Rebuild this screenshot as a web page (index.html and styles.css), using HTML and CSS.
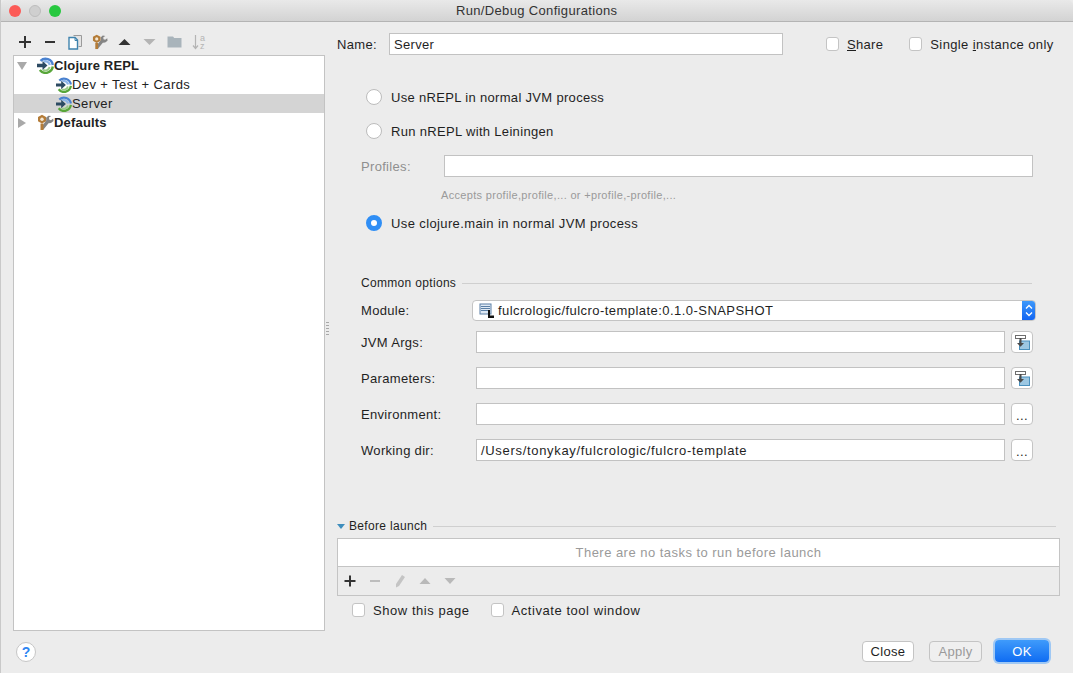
FILE: index.html
```html
<!DOCTYPE html>
<html lang="en">
<head>
<meta charset="utf-8">
<title>Run/Debug Configurations</title>
<link rel="stylesheet" href="styles.css">
</head>
<body>
<svg class="defs" width="0" height="0" aria-hidden="true">
  <symbol id="repl" viewBox="0 0 17 17">
    <path d="M3.500 3.800A7.300 7.300 0 0 1 15.800 8" fill="none" stroke="#4a82d0" stroke-width="2.400"/>
    <path d="M6.500 4.600A4.600 4.600 0 0 1 12.800 8" fill="none" stroke="#8db5e8" stroke-width="2.400"/>
    <path d="M15.800 9.500A7.300 7.300 0 0 1 2.800 13" fill="none" stroke="#58a63a" stroke-width="2.400"/>
    <path d="M12.600 10A4.600 4.600 0 0 1 6 13" fill="none" stroke="#9aca86" stroke-width="2"/>
    <path d="M0 6.800h5.500V4l5 4.500-5 4.500v-2.800H0z" fill="#2c4a62"/>
  </symbol>
  <symbol id="tool" viewBox="0 0 17 17">
    <path d="M6.500 15.500l5-6.200 2.500-.2 2.500-2-.3-2.600-2.200 1.700-1.800-.7-.2-2 2.200-1.400-2.800-.4-2.300 2 .1 2.900L4 13.500z" fill="#858585"/>
    <path d="M5 .8l4 2.200v4.300l-4 2.300-4-2.300V3z" fill="#b47c38"/>
    <circle cx="5" cy="5.200" r="1.700" fill="#f4e8d4"/>
    <path d="M3.500 9.500h3v6.500h-3z" fill="#b47c38"/>
  </symbol>
  <symbol id="insert" viewBox="0 0 16 16">
    <rect x="5.500" y="7" width="10" height="8.500" fill="#9cc7e2" stroke="#4a90bd"/>
    <rect x="1.500" y="1.500" width="10" height="3" fill="#fff" stroke="#6e6e6e"/>
    <path d="M5.500 4h2v5h2.500l-3.500 3.800L3 9h2.500z" fill="#4a4a4a"/>
  </symbol>
</svg>
<div class="window">
  <header class="titlebar">
    <div class="lights">
      <span class="light red"></span>
      <span class="light grey"></span>
      <span class="light green"></span>
    </div>
    <div class="title">Run/Debug Configurations</div>
  </header>
  <div class="content">
    <aside class="sidebar">
      <div class="toolbar">
        <span class="tb"><svg width="14" height="14" viewBox="0 0 14 14"><path d="M6 1h2v5h5v2H8v5H6V8H1V6h5z" fill="#333"/></svg></span>
        <span class="tb"><svg width="14" height="14" viewBox="0 0 14 14"><path d="M2 6h10v2H2z" fill="#333"/></svg></span>
        <span class="tb"><svg width="16" height="16" viewBox="0 0 16 16"><path d="M6.500 1.500h8v11h-3" fill="#e4e4e4" stroke="#9a9a9a"/><path d="M2 3.500h6l2.500 2.500v9H2z" fill="#fff" stroke="#3f83ad" stroke-width="1.400"/><path d="M8 3.500V6.500h2.500" fill="none" stroke="#3f83ad"/></svg></span>
        <span class="tb"><svg width="16" height="16"><use href="#tool"/></svg></span>
        <span class="tb"><svg width="13" height="8" viewBox="0 0 13 8"><path d="M6.500 1L12.500 7H.5z" fill="#333"/></svg></span>
        <span class="tb"><svg width="13" height="8" viewBox="0 0 13 8"><path d="M.5 1h12l-6 6z" fill="#b4b4b4"/></svg></span>
        <span class="tb"><svg width="15" height="13" viewBox="0 0 15 13"><path d="M.5 1.500h5.500l1.200 1.500h7.300v9.500H.5z" fill="#a9b4bb"/></svg></span>
        <span class="tb"><svg width="15" height="16" viewBox="0 0 15 16"><path d="M3.500 1v13M1 11.500l2.500 3 2.500-3" fill="none" stroke="#b4b4b4" stroke-width="1.200"/><text x="8" y="7" class="sort-letter">a</text><text x="8" y="15" class="sort-letter">z</text></svg></span>
      </div>
      <div class="tree">
        <div class="node bold"><span class="arrow open"></span><svg class="node-icon" width="17" height="17"><use href="#repl"/></svg><span>Clojure REPL</span></div>
        <div class="node child"><svg class="node-icon" width="16" height="16"><use href="#repl"/></svg><span>Dev + Test + Cards</span></div>
        <div class="node child selected"><svg class="node-icon" width="16" height="16"><use href="#repl"/></svg><span>Server</span></div>
        <div class="node bold"><span class="arrow closed"></span><svg class="node-icon" width="17" height="17"><use href="#tool"/></svg><span>Defaults</span></div>
      </div>
      <div class="help">?</div>
    </aside>
    <div class="splitter"><span class="grip"></span></div>
    <main class="form">
      <div class="name-row">
        <label class="name-label">Name:</label>
        <div class="field name-field">Server</div>
        <span class="check share-check"><span class="box"></span><span><u>S</u>hare</span></span>
        <span class="check wide-text"><span class="box"></span><span>Single <u>i</u>nstance only</span></span>
      </div>

      <div class="radio-row first"><span class="radio"></span><span>Use nREPL in normal JVM process</span></div>
      <div class="radio-row second"><span class="radio"></span><span>Run nREPL with Leiningen</span></div>
      <div class="profiles">
        <label class="profiles-label">Profiles:</label>
        <div class="field grow"></div>
      </div>
      <div class="hint">Accepts profile,profile,... or +profile,-profile,...</div>
      <div class="radio-row third"><span class="radio on"></span><span class="wide-text">Use clojure.main in normal JVM process</span></div>

      <div class="legend options-legend"><span>Common options</span><span class="rule"></span></div>
      <div class="module-row">
        <label class="opt-label module-label">Module:</label>
        <div class="combo">
          <svg class="module-icon" width="16" height="15" viewBox="0 0 16 15"><rect x="1" y="1" width="11" height="10" fill="#dfe9f4" stroke="#5a7fa6"/><path d="M2 3.500h9M2 5.500h9M2 7.500h9" stroke="#5a7fa6"/><path d="M9 7h2v5.500h4V15H9z" fill="#111"/></svg>
          <span class="combo-text">fulcrologic/fulcro-template:0.1.0-SNAPSHOT</span>
          <span class="stepper"><svg width="8" height="15" viewBox="0 0 8 15"><path d="M1 5.500l3-3 3 3M1 9.500l3 3 3-3" fill="none" stroke="#fff" stroke-width="1.300"/></svg></span>
        </div>
      </div>
      <div class="opt-row"><label class="opt-label">JVM Args:</label><div class="field grow"></div><span class="mini"><svg width="16" height="16"><use href="#insert"/></svg></span></div>
      <div class="opt-row"><label class="opt-label">Parameters:</label><div class="field grow"></div><span class="mini"><svg width="16" height="16"><use href="#insert"/></svg></span></div>
      <div class="opt-row"><label class="opt-label">Environment:</label><div class="field grow"></div><span class="mini dots">...</span></div>
      <div class="opt-row"><label class="opt-label">Working dir:</label><div class="field grow path-text">/Users/tonykay/fulcrologic/fulcro-template</div><span class="mini dots">...</span></div>

      <div class="legend launch-legend"><span class="tri"></span><span>Before launch</span><span class="rule"></span></div>
      <div class="tasks">
        <div class="tasks-empty">There are no tasks to run before launch</div>
        <div class="tasks-bar">
          <span class="tb2"><svg width="12" height="12" viewBox="0 0 12 12"><path d="M5 .5h2V5h4.500v2H7v4.500H5V7H.5V5H5z" fill="#333"/></svg></span>
          <span class="tb2"><svg width="12" height="12" viewBox="0 0 12 12"><path d="M1 5h10v2H1z" fill="#bdbdbd"/></svg></span>
          <span class="tb2"><svg width="12" height="14" viewBox="0 0 12 14"><path d="M8 1l3 2-6 9-3 1.500L2 10z" fill="#c4c4c4"/></svg></span>
          <span class="tb2"><svg width="12" height="8" viewBox="0 0 12 8"><path d="M6 1l5.500 6H.5z" fill="#b9b9b9"/></svg></span>
          <span class="tb2"><svg width="12" height="8" viewBox="0 0 12 8"><path d="M.5 1h11L6 7z" fill="#b9b9b9"/></svg></span>
        </div>
      </div>
      <div class="launch-checks">
        <span class="check"><span class="box"></span><span>Show this page</span></span>
        <span class="check"><span class="box"></span><span>Activate tool window</span></span>
      </div>
      <div class="actions">
        <span class="btn close">Close</span>
        <span class="btn disabled">Apply</span>
        <span class="btn primary">OK</span>
      </div>
    </main>
  </div>
</div>
</body>
</html>
```
FILE: styles.css
```css
* { box-sizing: border-box; }
html, body { margin: 0; height: 100%; }
body {
  background: #ececec;
  font-family: "Liberation Sans", Arial, sans-serif;
  font-size: 13px;
  color: #1f1f1f;
  overflow: hidden;
}
.defs { display: block; height: 0; }
.window {
  width: 1073px;
  height: 673px;
  display: flex;
  flex-direction: column;
  background: #ececec;
  border-left: 1px solid #c9c9c9;
}
.titlebar {
  height: 22px;
  flex: none;
  display: flex;
  align-items: center;
  background: linear-gradient(#e9e9e9, #d3d3d3);
  border-bottom: 1px solid #b4b4b4;
  border-radius: 5px 5px 0 0;
  padding-left: 8px;
}
.lights { display: flex; gap: 8px; width: 447px; }
.light { width: 12px; height: 12px; border-radius: 50%; }
.red { background: #fc5b57; }
.grey { background: #cfcfcf; border: 1px solid #bdbdbd; }
.green { background: #27c83f; }
.title { font-size: 13px; color: #333; letter-spacing: .34px; }
.content { flex: 1; display: flex; min-height: 0; }

.sidebar {
  width: 324px;
  flex: none;
  padding-left: 11px;
  display: flex;
  flex-direction: column;
}
.toolbar {
  height: 33px;
  display: flex;
  align-items: center;
  padding-top: 6px;
}
.tb { width: 25px; display: flex; justify-content: center; align-items: center; }
.sort-letter { font-size: 9px; fill: #b4b4b4; }
.tree {
  height: 576px;
  margin-left: 1px;
  background: #fff;
  border: 1px solid #c3c3c3;
}
.node {
  height: 19px;
  display: flex;
  align-items: center;
  font-size: 13px;
  letter-spacing: .4px;
  padding-left: 21px;
  color: #222;
}
.node.bold { font-weight: bold; letter-spacing: .18px; }
.node.child { padding-left: 42px; }
.node.selected { background: #d4d4d4; }
.node-icon { flex: none; }
.arrow { width: 0; height: 0; flex: none; }
.arrow.open {
  border-left: 5px solid transparent;
  border-right: 5px solid transparent;
  border-top: 8px solid #a9a9a9;
  margin-left: -18px;
  margin-right: 10px;
}
.arrow.closed {
  border-top: 5px solid transparent;
  border-bottom: 5px solid transparent;
  border-left: 8px solid #a9a9a9;
  margin-left: -17px;
  margin-right: 11px;
}
.help {
  width: 20px;
  height: 20px;
  margin: 11px 0 0 4px;
  border-radius: 50%;
  border: 1px solid #c6c6c6;
  background: #fff;
  color: #2f86f2;
  font-size: 14px;
  font-weight: bold;
  display: flex;
  align-items: center;
  justify-content: center;
}

.splitter {
  width: 12px;
  flex: none;
  display: flex;
  align-items: center;
  justify-content: center;
  padding: 0 7px 37px 0;
}
.grip {
  width: 3px;
  height: 14px;
  flex: none;
  background: repeating-linear-gradient(#a8a8a8 0 1px, transparent 1px 3px);
}

.form {
  flex: 1;
  min-width: 0;
  display: flex;
  flex-direction: column;
  padding-right: 13px;
  letter-spacing: .32px;
}
.field {
  height: 22px;
  background: #fff;
  border: 1px solid #c2c2c2;
  padding: 0 4px;
  display: flex;
  align-items: center;
}
.grow { flex: 1; min-width: 0; }
.path-text { letter-spacing: .68px; }
.wide-text { letter-spacing: .38px; }
.name-row {
  display: flex;
  align-items: center;
  margin-top: 11px;
  height: 22px;
}
.name-label { width: 52px; flex: none; }
.name-field { width: 394px; flex: none; margin-right: 43px; }
.check { display: inline-flex; align-items: center; }
.box {
  width: 13px;
  height: 14px;
  border: 1px solid #c4c4c4;
  border-radius: 3px;
  background: #fff;
  margin-right: 8px;
  flex: none;
}
.share-check { margin-right: 26px; }
.radio-row {
  display: flex;
  align-items: center;
  height: 18px;
  padding-left: 29px;
}
.radio {
  width: 16px;
  height: 16px;
  border-radius: 50%;
  border: 1px solid #bcbcbc;
  background: #fff;
  margin-right: 9px;
  flex: none;
}
.radio.on {
  border: 5px solid #2f8ef5;
}
.radio-row.first { margin-top: 33px; }
.radio-row.second { margin-top: 16px; }
.radio-row.third { margin-top: 12px; }
.profiles {
  display: flex;
  align-items: center;
  margin-top: 15px;
  padding-left: 24px;
  padding-right: 27px;
}
.profiles-label { width: 83px; flex: none; color: #8f8f8f; }
.hint {
  margin: 11px 0 0 104px;
  font-size: 11px;
  color: #9a9a9a;
  height: 14px;
  line-height: 14px;
}
.legend { display: flex; align-items: center; }
.rule { flex: 1; height: 1px; background: #cfcfcf; }
.options-legend {
  margin-top: 43px;
  padding-left: 24px;
  padding-right: 28px;
  font-size: 12px;
  height: 16px;
}
.options-legend .rule { margin-left: 6px; margin-top: 1px; }
.module-row {
  display: flex;
  align-items: center;
  margin-top: 9px;
  padding-left: 24px;
  padding-right: 24px;
}
.module-label { width: 111px; }
.opt-label { flex: none; }
.combo {
  flex: 1;
  min-width: 0;
  height: 21px;
  background: #fff;
  border: 1px solid #c4c4c4;
  border-radius: 4px;
  display: flex;
  align-items: center;
  padding-left: 6px;
  overflow: hidden;
  letter-spacing: .45px;
}
.module-icon { flex: none; margin-right: 3px; }
.combo-text { flex: 1; }
.stepper {
  width: 14px;
  height: 21px;
  margin-right: -1px;
  background: linear-gradient(#3f9bfb, #0f62f2);
  display: flex;
  align-items: center;
  justify-content: center;
  flex: none;
}
.opt-row {
  display: flex;
  align-items: center;
  height: 22px;
  margin-top: 14px;
  padding-left: 24px;
  padding-right: 27px;
}
.module-row + .opt-row { margin-top: 10px; }
.opt-row .opt-label { width: 115px; }
.mini {
  width: 22px;
  height: 22px;
  margin-left: 6px;
  flex: none;
  background: #fff;
  border: 1px solid #c4c4c4;
  border-radius: 4px;
  display: flex;
  align-items: center;
  justify-content: center;
}
.dots { font-size: 13px; align-items: flex-end; line-height: 17px; }
.launch-legend {
  margin-top: 58px;
  height: 14px;
  font-size: 12px;
}
.tri {
  width: 0;
  height: 0;
  border-left: 4px solid transparent;
  border-right: 4px solid transparent;
  border-top: 5px solid #3f8ebd;
  margin-right: 4px;
}
.launch-legend .rule { margin-left: 6px; margin-right: 4px; }
.tasks {
  margin-top: 5px;
  height: 58px;
  border: 1px solid #c4c4c4;
  display: flex;
  flex-direction: column;
}
.tasks-empty {
  height: 28px;
  background: #fff;
  color: #9a9a9a;
  display: flex;
  align-items: center;
  justify-content: center;
  border-bottom: 1px solid #c4c4c4;
  letter-spacing: .47px;
}
.tasks-bar {
  flex: 1;
  display: flex;
  align-items: center;
  padding-left: 6px;
  gap: 13px;
}
.tb2 { width: 12px; display: flex; justify-content: center; }
.launch-checks {
  display: flex;
  gap: 21px;
  margin-top: 5px;
  padding-left: 15px;
  height: 18px;
  align-items: center;
  letter-spacing: .55px;
}
.actions {
  display: flex;
  justify-content: flex-end;
  gap: 15px;
  margin-top: 21px;
  padding-right: 11px;
  align-items: center;
}
.btn {
  width: 53px;
  height: 21px;
  background: #fff;
  border: 1px solid #c4c4c4;
  border-radius: 4px;
  display: flex;
  align-items: center;
  justify-content: center;
}
.btn.close { width: 52px; }
.btn.disabled { background: #efefef; color: #9a9a9a; margin-right: -2px; }
.btn.primary {
  width: 54px;
  height: 22px;
  background: linear-gradient(#3f9bfb, #0f6cf2);
  color: #fff;
  border: none;
  box-shadow: 0 0 0 2px #9fc8f4;
}
```
